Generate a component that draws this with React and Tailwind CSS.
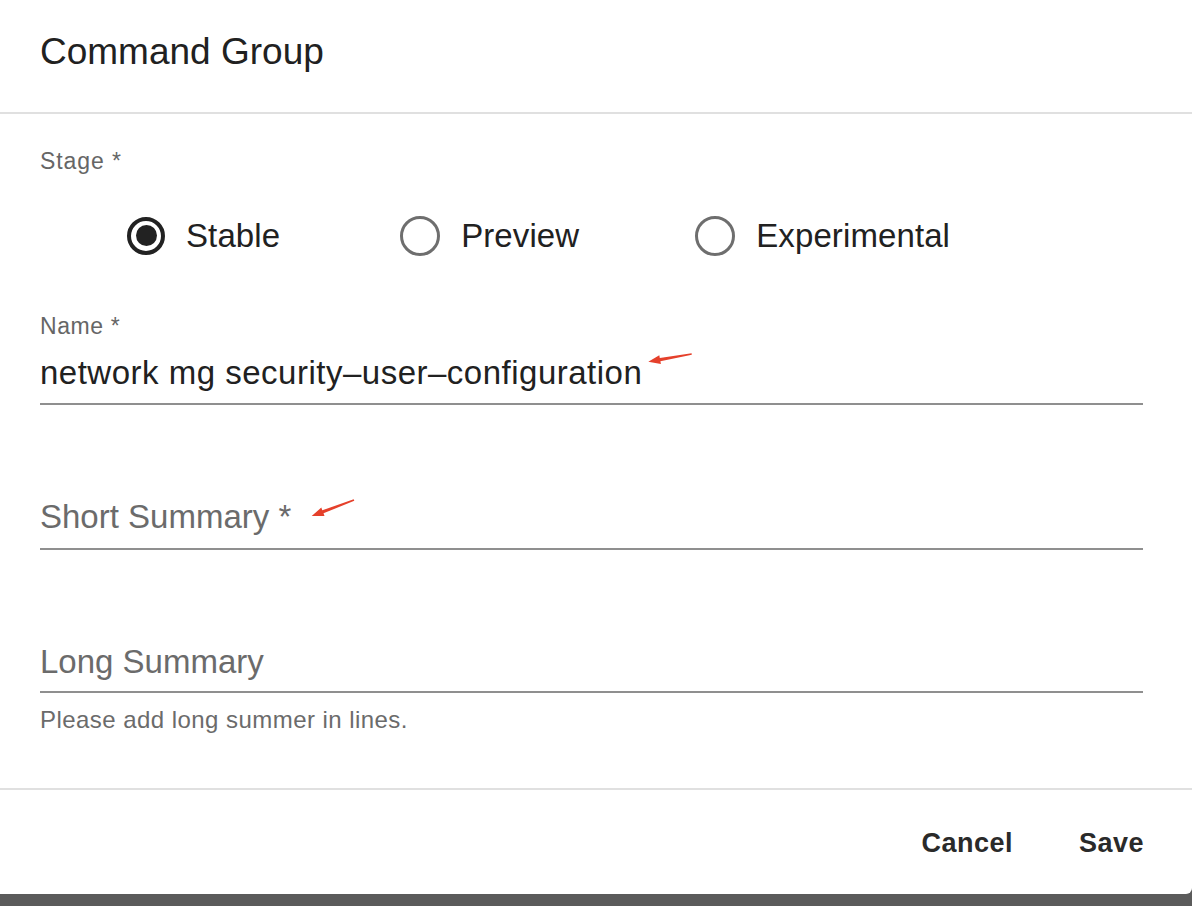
import React from "react";

function Radio({ checked, label, className = "" }) {
  return (
    <div className={"flex items-center " + className}>
      {checked ? (
        <div className="w-[38px] h-[38px] rounded-full border-[4px] border-[#222222] flex items-center justify-center">
          <div className="w-[21px] h-[21px] rounded-full bg-[#222222]" />
        </div>
      ) : (
        <div className="w-[40px] h-[40px] rounded-full border-[3.5px] border-[#6e6e6e]" />
      )}
      <span className="ml-[21px] text-[33px] leading-[45px] tracking-[0.1px] text-[#212121]">
        {label}
      </span>
    </div>
  );
}

export default function App() {
  return (
    <div className="relative w-[1192px] h-[906px] bg-[#5b5b5b] font-['Liberation_Sans',Arial,sans-serif] overflow-hidden">
      <div className="w-[1192px] h-[894px] bg-white rounded-br-[6px] flex flex-col">
        {/* Header */}
        <div className="h-[114px] border-b-2 border-[#e0e0e0] px-[40px] pt-[30px]">
          <div className="text-[37px] leading-[44px] text-[#212121]">Command Group</div>
        </div>

        {/* Body */}
        <div className="flex-1 pl-[40px] pr-[49px] flex flex-col">
          <div className="mt-[33px] text-[23px] leading-[28px] tracking-[0.9px] text-[#666666]">
            Stage *
          </div>
          <div className="mt-[38px] h-[45px] flex items-center pl-[87px]">
            <Radio checked label="Stable" className="mr-[120px]" />
            <Radio label="Preview" className="mr-[116px]" />
            <Radio label="Experimental" />
          </div>

          <div className="mt-[54px] text-[23px] leading-[28px] tracking-[0.6px] text-[#666666]">
            Name *
          </div>
          <div className="mt-[10px] pb-[8px] border-b-2 border-[#8f8f8f]">
            <div className="text-[33px] leading-[45px] tracking-[0.5px] text-[#212121]">
              network mg security–user–configuration
            </div>
          </div>

          <div className="mt-[89px] pb-[9px] border-b-2 border-[#8f8f8f]">
            <div className="text-[33px] leading-[45px] text-[#6b6b6b]">
              Short Summary *
            </div>
          </div>

          <div className="mt-[89px] pb-[7px] border-b-2 border-[#8f8f8f]">
            <div className="text-[33px] leading-[45px] text-[#6b6b6b]">
              Long Summary
            </div>
          </div>
          <div className="mt-[13px] text-[24px] leading-[28px] tracking-[0.45px] text-[#6b6b6b]">
            Please add long summer in lines.
          </div>
        </div>

        {/* Footer */}
        <div className="h-[106px] border-t-2 border-[#e0e0e0] pr-[48px] pt-[37px] flex justify-end gap-[66px]">
          <span className="text-[27px] leading-[32px] font-bold tracking-[0.5px] text-[#2a2a2a]">Cancel</span>
          <span className="text-[27px] leading-[32px] font-bold tracking-[0.5px] text-[#2a2a2a]">Save</span>
        </div>
      </div>

      {/* Annotation arrows */}
      <svg className="absolute left-0 top-0 pointer-events-none" width="1192" height="906">
        <polygon
          fill="#e5402b"
          points="648.3,361.7 660.9,364.0 660.4,361.2 691.8,354.8 691.6,353.2 659.8,358.0 659.3,355.2"
        />
        <polygon
          fill="#e5402b"
          points="311.7,516 324.5,516.0 323.5,513.3 354.3,500.75 353.7,499.25 322.3,510.3 321.3,507.6"
        />
      </svg>
    </div>
  );
}
